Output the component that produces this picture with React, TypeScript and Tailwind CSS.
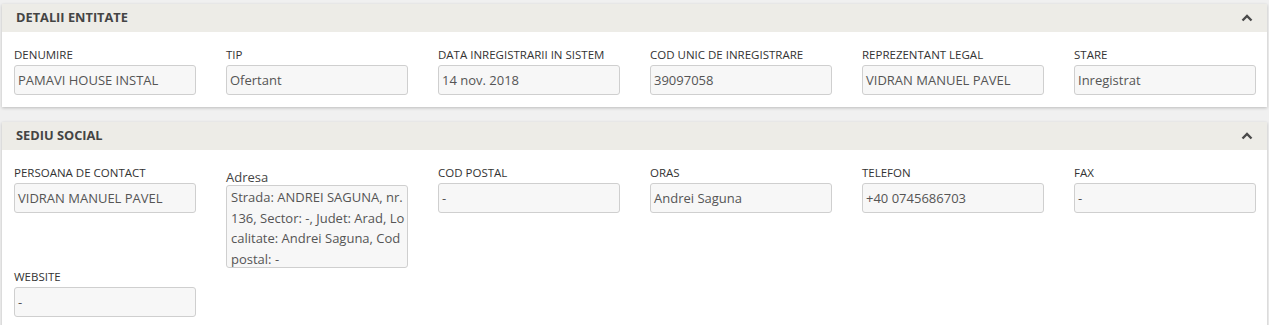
import React from "react";

type Field = { label: string; value: string; lines?: string[] };

const entitate: Field[] = [
  { label: "DENUMIRE", value: "PAMAVI HOUSE INSTAL" },
  { label: "TIP", value: "Ofertant" },
  { label: "DATA INREGISTRARII IN SISTEM", value: "14 nov. 2018" },
  { label: "COD UNIC DE INREGISTRARE", value: "39097058" },
  { label: "REPREZENTANT LEGAL", value: "VIDRAN MANUEL PAVEL" },
  { label: "STARE", value: "Inregistrat" },
];

const sediu: Field[] = [
  { label: "PERSOANA DE CONTACT", value: "VIDRAN MANUEL PAVEL" },
  {
    label: "Adresa",
    value: "",
    lines: [
      "Strada: ANDREI SAGUNA, nr.",
      "136, Sector: -, Judet: Arad, Lo",
      "calitate: Andrei Saguna, Cod",
      "postal: -",
    ],
  },
  { label: "COD POSTAL", value: "-" },
  { label: "ORAS", value: "Andrei Saguna" },
  { label: "TELEFON", value: "+40 0745686703" },
  { label: "FAX", value: "-" },
  { label: "WEBSITE", value: "-" },
];

function Chevron() {
  return (
    <svg width="12" height="8" viewBox="0 0 12 8" className="text-[#4a4a4a]">
      <polyline points="1.5,6.5 6,2 10.5,6.5" fill="none" stroke="currentColor" strokeWidth="2.4" />
    </svg>
  );
}

function FieldBox({ f }: { f: Field }) {
  if (f.lines) {
    return (
      <div className="flex flex-col">
        <label className="pt-[5px] text-[13px] leading-[16px] text-[#444]">{f.label}</label>
        <div className="h-[83px] rounded-[3px] border border-[#cfcfcf] bg-[#f7f7f7] px-[4px] pt-[1px] text-[13px] leading-[20.5px] text-[#555] whitespace-nowrap">
          {f.lines.map((l) => (
            <div key={l}>{l}</div>
          ))}
        </div>
      </div>
    );
  }
  return (
    <div className="flex flex-col">
      <label className="mb-[2px] text-[11.5px] leading-[16px] text-[#333] pt-[1px]">{f.label}</label>
      <div className="flex h-[30px] items-center rounded-[3px] border border-[#cfcfcf] bg-[#f7f7f7] px-[3px] pt-[2px] text-[13px] text-[#555]">
        {f.value}
      </div>
    </div>
  );
}

function Panel({ title, fields }: { title: string; fields: Field[] }) {
  return (
    <section className="bg-white shadow-[0_1px_3px_rgba(0,0,0,0.22)]">
      <div className="flex h-[28px] items-center justify-between bg-[#edece7] pl-[14px] pr-[14px]">
        <h2 className="text-[12.8px] font-bold text-[#444]">{title}</h2>
        <Chevron />
      </div>
      <div className="grid grid-cols-[repeat(6,182px)] gap-x-[30px] items-start px-3 pt-[14px] pb-[12px]">
        {fields.map((f) => (
          <FieldBox key={f.label} f={f} />
        ))}
      </div>
    </section>
  );
}

export default function App() {
  return (
    <div
      className="min-h-[325px] bg-[#f0f0f0] pl-[2px] pr-[2px] pt-[4px]"
      style={{ fontFamily: '"Open Sans", "Noto Sans", sans-serif' }}
    >
      <div className="flex flex-col gap-[15px]">
        <Panel title="DETALII ENTITATE" fields={entitate} />
        <Panel title="SEDIU SOCIAL" fields={sediu} />
      </div>
    </div>
  );
}
